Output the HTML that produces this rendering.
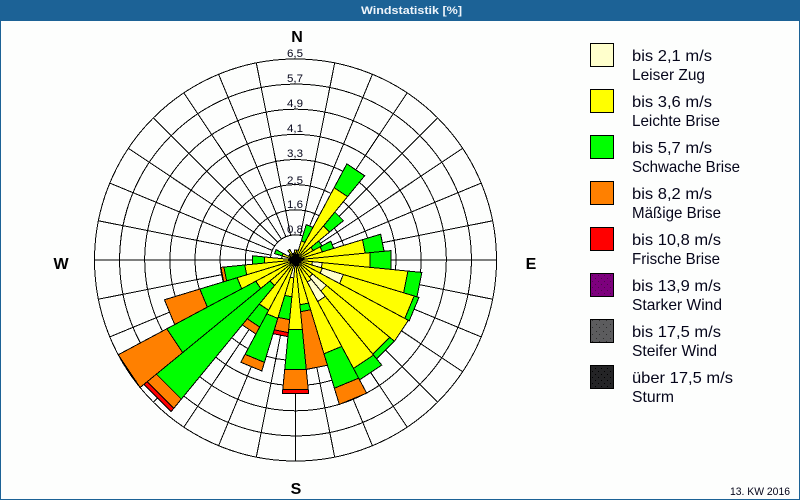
<!DOCTYPE html>
<html><head><meta charset="utf-8"><title>Windstatistik</title>
<style>
html,body{margin:0;padding:0;background:#fff}
svg{display:block}
text{font-family:"Liberation Sans",sans-serif;fill:#05051a}
.leg{font-size:16px}
.val{font-size:11px;text-anchor:middle}
.dir{font-size:16px;font-weight:bold;text-anchor:middle;fill:#000}
.g{fill:none;stroke:#000;stroke-width:1}
</style></head><body>
<svg width="800" height="500" viewBox="0 0 800 500" xmlns="http://www.w3.org/2000/svg">
<defs>
<polygon id="w" points="0,0 .098,-.995 -.098,-.995" stroke="#000" stroke-width="1" vector-effect="non-scaling-stroke" stroke-linejoin="miter" shape-rendering="crispEdges"/>
<line id="s" x1="0" y1="-25" x2="0" y2="-201" stroke="#000" stroke-width="1" shape-rendering="crispEdges"/>
<pattern id="p1" width="6" height="6" patternUnits="userSpaceOnUse"><rect width="6" height="6" fill="#7d007d"/><rect x="1" y="2" width="1" height="1" fill="#4a0a4a"/><rect x="4" y="5" width="1" height="1" fill="#4a0a4a"/></pattern>
<pattern id="p2" width="7" height="7" patternUnits="userSpaceOnUse"><rect width="7" height="7" fill="#5c5c5e"/><rect x="1" y="2" width="1" height="1" fill="#2e2e2e"/><rect x="4" y="5" width="1" height="1" fill="#2e2e2e"/></pattern>
<pattern id="p3" width="6" height="6" patternUnits="userSpaceOnUse"><rect width="6" height="6" fill="#242426"/><rect x="1" y="2" width="1" height="1" fill="#000"/><rect x="4" y="5" width="1" height="1" fill="#000"/></pattern>
</defs>
<rect width="800" height="500" fill="#1c6296"/>
<rect x="1" y="21" width="798" height="478" fill="#fdfefd"/>
<text x="411.5" y="14" font-size="11" font-weight="bold" textLength="101" lengthAdjust="spacingAndGlyphs" style="text-anchor:middle;fill:#eef4fa">Windstatistik [%]</text>

<g transform="translate(295.5 260)">
<g class="g" shape-rendering="crispEdges">
<circle r="25.1"/><circle r="50.2"/><circle r="75.4"/><circle r="100.5"/><circle r="125.6"/><circle r="150.8"/><circle r="175.9"/><circle r="201"/>
</g>
<use href="#s" transform="rotate(11.25)"/><use href="#s" transform="rotate(22.5)"/><use href="#s" transform="rotate(33.75)"/><use href="#s" transform="rotate(45)"/><use href="#s" transform="rotate(56.25)"/><use href="#s" transform="rotate(67.5)"/><use href="#s" transform="rotate(78.75)"/><use href="#s" transform="rotate(90)"/><use href="#s" transform="rotate(101.25)"/><use href="#s" transform="rotate(112.5)"/><use href="#s" transform="rotate(123.75)"/><use href="#s" transform="rotate(135)"/><use href="#s" transform="rotate(146.25)"/><use href="#s" transform="rotate(157.5)"/><use href="#s" transform="rotate(168.75)"/><use href="#s" transform="rotate(180)"/><use href="#s" transform="rotate(191.25)"/><use href="#s" transform="rotate(202.5)"/><use href="#s" transform="rotate(213.75)"/><use href="#s" transform="rotate(225)"/><use href="#s" transform="rotate(236.25)"/><use href="#s" transform="rotate(247.5)"/><use href="#s" transform="rotate(258.75)"/><use href="#s" transform="rotate(270)"/><use href="#s" transform="rotate(281.25)"/><use href="#s" transform="rotate(292.5)"/><use href="#s" transform="rotate(303.75)"/><use href="#s" transform="rotate(315)"/><use href="#s" transform="rotate(326.25)"/><use href="#s" transform="rotate(337.5)"/><use href="#s" transform="rotate(348.75)"/>

<g transform="rotate(0)"><use href="#w" transform="scale(10)" fill="#ff0"/></g>
<g transform="rotate(11.25)"><use href="#w" transform="scale(10)" fill="#ff0"/></g>
<g transform="rotate(22.5)"><use href="#w" transform="scale(37)" fill="#0f0"/><use href="#w" transform="scale(20)" fill="#ff0"/></g>
<g transform="rotate(33.75)"><use href="#w" transform="scale(109)" fill="#0f0"/><use href="#w" transform="scale(82)" fill="#ff0"/></g>
<g transform="rotate(45)"><use href="#w" transform="scale(62)" fill="#0f0"/><use href="#w" transform="scale(44)" fill="#ff0"/></g>
<g transform="rotate(56.25)"><use href="#w" transform="scale(30)" fill="#0f0"/><use href="#w" transform="scale(20)" fill="#ff0"/></g>
<g transform="rotate(67.5)"><use href="#w" transform="scale(40)" fill="#0f0"/><use href="#w" transform="scale(28)" fill="#ff0"/></g>
<g transform="rotate(78.75)"><use href="#w" transform="scale(89)" fill="#0f0"/><use href="#w" transform="scale(70)" fill="#ff0"/></g>
<g transform="rotate(90)"><use href="#w" transform="scale(96)" fill="#0f0"/><use href="#w" transform="scale(75)" fill="#ff0"/></g>
<g transform="rotate(101.25)"><use href="#w" transform="scale(127)" fill="#0f0"/><use href="#w" transform="scale(113)" fill="#ff0"/><use href="#w" transform="scale(27)" fill="#ffc"/><use href="#w" transform="scale(17)" fill="#ff0"/></g>
<g transform="rotate(112.5)"><use href="#w" transform="scale(129)" fill="#0f0"/><use href="#w" transform="scale(124)" fill="#ff0"/><use href="#w" transform="scale(50)" fill="#ffc"/><use href="#w" transform="scale(28)" fill="#ff0"/></g>
<g transform="rotate(123.75)"><use href="#w" transform="scale(128)" fill="#ff0"/></g>
<g transform="rotate(135)"><use href="#w" transform="scale(128)" fill="#0f0"/><use href="#w" transform="scale(122)" fill="#ff0"/><use href="#w" transform="scale(40)" fill="#ffc"/><use href="#w" transform="scale(22)" fill="#ff0"/></g>
<g transform="rotate(146.25)"><use href="#w" transform="scale(136)" fill="#0f0"/><use href="#w" transform="scale(123)" fill="#ff0"/><use href="#w" transform="scale(47)" fill="#ffc"/><use href="#w" transform="scale(25)" fill="#ff0"/></g>
<g transform="rotate(157.5)"><use href="#w" transform="scale(151)" fill="#ff8000"/><use href="#w" transform="scale(134)" fill="#0f0"/><use href="#w" transform="scale(98)" fill="#ff0"/></g>
<g transform="rotate(168.75)"><use href="#w" transform="scale(110)" fill="#ff8000"/><use href="#w" transform="scale(52)" fill="#0f0"/><use href="#w" transform="scale(45)" fill="#ff0"/></g>
<g transform="rotate(180)"><use href="#w" transform="scale(134)" fill="#f00"/><use href="#w" transform="scale(130)" fill="#ff8000"/><use href="#w" transform="scale(110)" fill="#0f0"/><use href="#w" transform="scale(70)" fill="#ff0"/></g>
<g transform="rotate(191.25)"><use href="#w" transform="scale(77)" fill="#f00"/><use href="#w" transform="scale(73)" fill="#ff8000"/><use href="#w" transform="scale(60)" fill="#0f0"/><use href="#w" transform="scale(37)" fill="#ff0"/><use href="#w" transform="scale(18)" fill="#ffc"/></g>
<g transform="rotate(202.5)"><use href="#w" transform="scale(116)" fill="#ff8000"/><use href="#w" transform="scale(107)" fill="#0f0"/><use href="#w" transform="scale(61)" fill="#ff0"/></g>
<g transform="rotate(213.75)"><use href="#w" transform="scale(84)" fill="#ff8000"/><use href="#w" transform="scale(76)" fill="#0f0"/><use href="#w" transform="scale(57)" fill="#ff0"/></g>
<g transform="rotate(225)"><use href="#w" transform="scale(196)" fill="#f00"/><use href="#w" transform="scale(192)" fill="#ff8000"/><use href="#w" transform="scale(180)" fill="#0f0"/><use href="#w" transform="scale(33)" fill="#ff0"/></g>
<g transform="rotate(236.25)"><use href="#w" transform="scale(201)" fill="#ff8000"/><use href="#w" transform="scale(146)" fill="#0f0"/><use href="#w" transform="scale(45)" fill="#ff0"/></g>
<g transform="rotate(247.5)"><use href="#w" transform="scale(137)" fill="#ff8000"/><use href="#w" transform="scale(100)" fill="#0f0"/><use href="#w" transform="scale(61)" fill="#ff0"/></g>
<g transform="rotate(258.75)"><use href="#w" transform="scale(75)" fill="#ff8000"/><use href="#w" transform="scale(72)" fill="#0f0"/><use href="#w" transform="scale(51)" fill="#ff0"/></g>
<g transform="rotate(270)"><use href="#w" transform="scale(43)" fill="#0f0"/><use href="#w" transform="scale(31)" fill="#ff0"/></g>
<g transform="rotate(281.25)"><use href="#w" transform="scale(14)" fill="#ffc"/></g>
<g transform="rotate(292.5)"><use href="#w" transform="scale(22)" fill="#0f0"/><use href="#w" transform="scale(14)" fill="#ff0"/></g>
<g transform="rotate(303.75)"><use href="#w" transform="scale(8)" fill="#ff0"/></g>
<g transform="rotate(315)"><use href="#w" transform="scale(8)" fill="#ff0"/></g>
<g transform="rotate(326.25)"><use href="#w" transform="scale(12)" fill="#ff0"/></g>
<g transform="rotate(337.5)"><use href="#w" transform="scale(7)" fill="#ff0"/></g>
<g transform="rotate(348.75)"><use href="#w" transform="scale(7)" fill="#ff0"/></g>
<circle r="3.5" fill="#000"/>
<line x1="0" y1="-1" x2="9" y2="-1" stroke="#000" stroke-width="2" shape-rendering="crispEdges"/>
<line x1="0" y1="-1" x2="-7" y2="-1" stroke="#000" stroke-width="2" shape-rendering="crispEdges"/>
</g>

<text class="val" x="295" y="57" textLength="16" lengthAdjust="spacingAndGlyphs">6,5</text>
<text class="val" x="295" y="82" textLength="16" lengthAdjust="spacingAndGlyphs">5,7</text>
<text class="val" x="295" y="107" textLength="16" lengthAdjust="spacingAndGlyphs">4,9</text>
<text class="val" x="295" y="132" textLength="16" lengthAdjust="spacingAndGlyphs">4,1</text>
<text class="val" x="295" y="157" textLength="16" lengthAdjust="spacingAndGlyphs">3,3</text>
<text class="val" x="295" y="184" textLength="16" lengthAdjust="spacingAndGlyphs">2,5</text>
<text class="val" x="295" y="208" textLength="16" lengthAdjust="spacingAndGlyphs">1,6</text>
<text class="val" x="295" y="233" textLength="16" lengthAdjust="spacingAndGlyphs">0,8</text>

<text class="dir" x="297" y="42">N</text>
<text class="dir" x="61" y="269">W</text>
<text class="dir" x="531" y="269">E</text>
<text class="dir" x="296" y="494">S</text>

<g stroke="#000" stroke-width="1">
<rect x="590.5" y="43.5" width="23" height="23" fill="#ffc"/>
<rect x="590.5" y="89.5" width="23" height="23" fill="#ff0"/>
<rect x="590.5" y="135.5" width="23" height="23" fill="#0f0"/>
<rect x="590.5" y="181.5" width="23" height="23" fill="#ff8000"/>
<rect x="590.5" y="227.5" width="23" height="23" fill="#f00"/>
<rect x="590.5" y="273.5" width="23" height="23" fill="url(#p1)"/>
<rect x="590.5" y="319.5" width="23" height="23" fill="url(#p2)"/>
<rect x="590.5" y="365.5" width="23" height="23" fill="url(#p3)"/>
</g>
<g class="leg">
<text class="leg" x="632" y="61" textLength="80" lengthAdjust="spacingAndGlyphs">bis 2,1 m/s</text>
<text class="leg" x="632" y="80" textLength="73" lengthAdjust="spacingAndGlyphs">Leiser Zug</text>
<text class="leg" x="632" y="107" textLength="80" lengthAdjust="spacingAndGlyphs">bis 3,6 m/s</text>
<text class="leg" x="632" y="126" textLength="88" lengthAdjust="spacingAndGlyphs">Leichte Brise</text>
<text class="leg" x="632" y="153" textLength="80" lengthAdjust="spacingAndGlyphs">bis 5,7 m/s</text>
<text class="leg" x="632" y="172" textLength="108" lengthAdjust="spacingAndGlyphs">Schwache Brise</text>
<text class="leg" x="632" y="199" textLength="80" lengthAdjust="spacingAndGlyphs">bis 8,2 m/s</text>
<text class="leg" x="632" y="218" textLength="89" lengthAdjust="spacingAndGlyphs">Mäßige Brise</text>
<text class="leg" x="632" y="245" textLength="89" lengthAdjust="spacingAndGlyphs">bis 10,8 m/s</text>
<text class="leg" x="632" y="264" textLength="88" lengthAdjust="spacingAndGlyphs">Frische Brise</text>
<text class="leg" x="632" y="291" textLength="89" lengthAdjust="spacingAndGlyphs">bis 13,9 m/s</text>
<text class="leg" x="632" y="310" textLength="90" lengthAdjust="spacingAndGlyphs">Starker Wind</text>
<text class="leg" x="632" y="337" textLength="89" lengthAdjust="spacingAndGlyphs">bis 17,5 m/s</text>
<text class="leg" x="632" y="356" textLength="85" lengthAdjust="spacingAndGlyphs">Steifer Wind</text>
<text class="leg" x="632" y="383" textLength="101" lengthAdjust="spacingAndGlyphs">über 17,5 m/s</text>
<text class="leg" x="632" y="402" textLength="42" lengthAdjust="spacingAndGlyphs">Sturm</text>
</g>
<text x="730" y="495" font-size="11" textLength="60" lengthAdjust="spacingAndGlyphs">13. KW 2016</text>
</svg>
</body></html>
